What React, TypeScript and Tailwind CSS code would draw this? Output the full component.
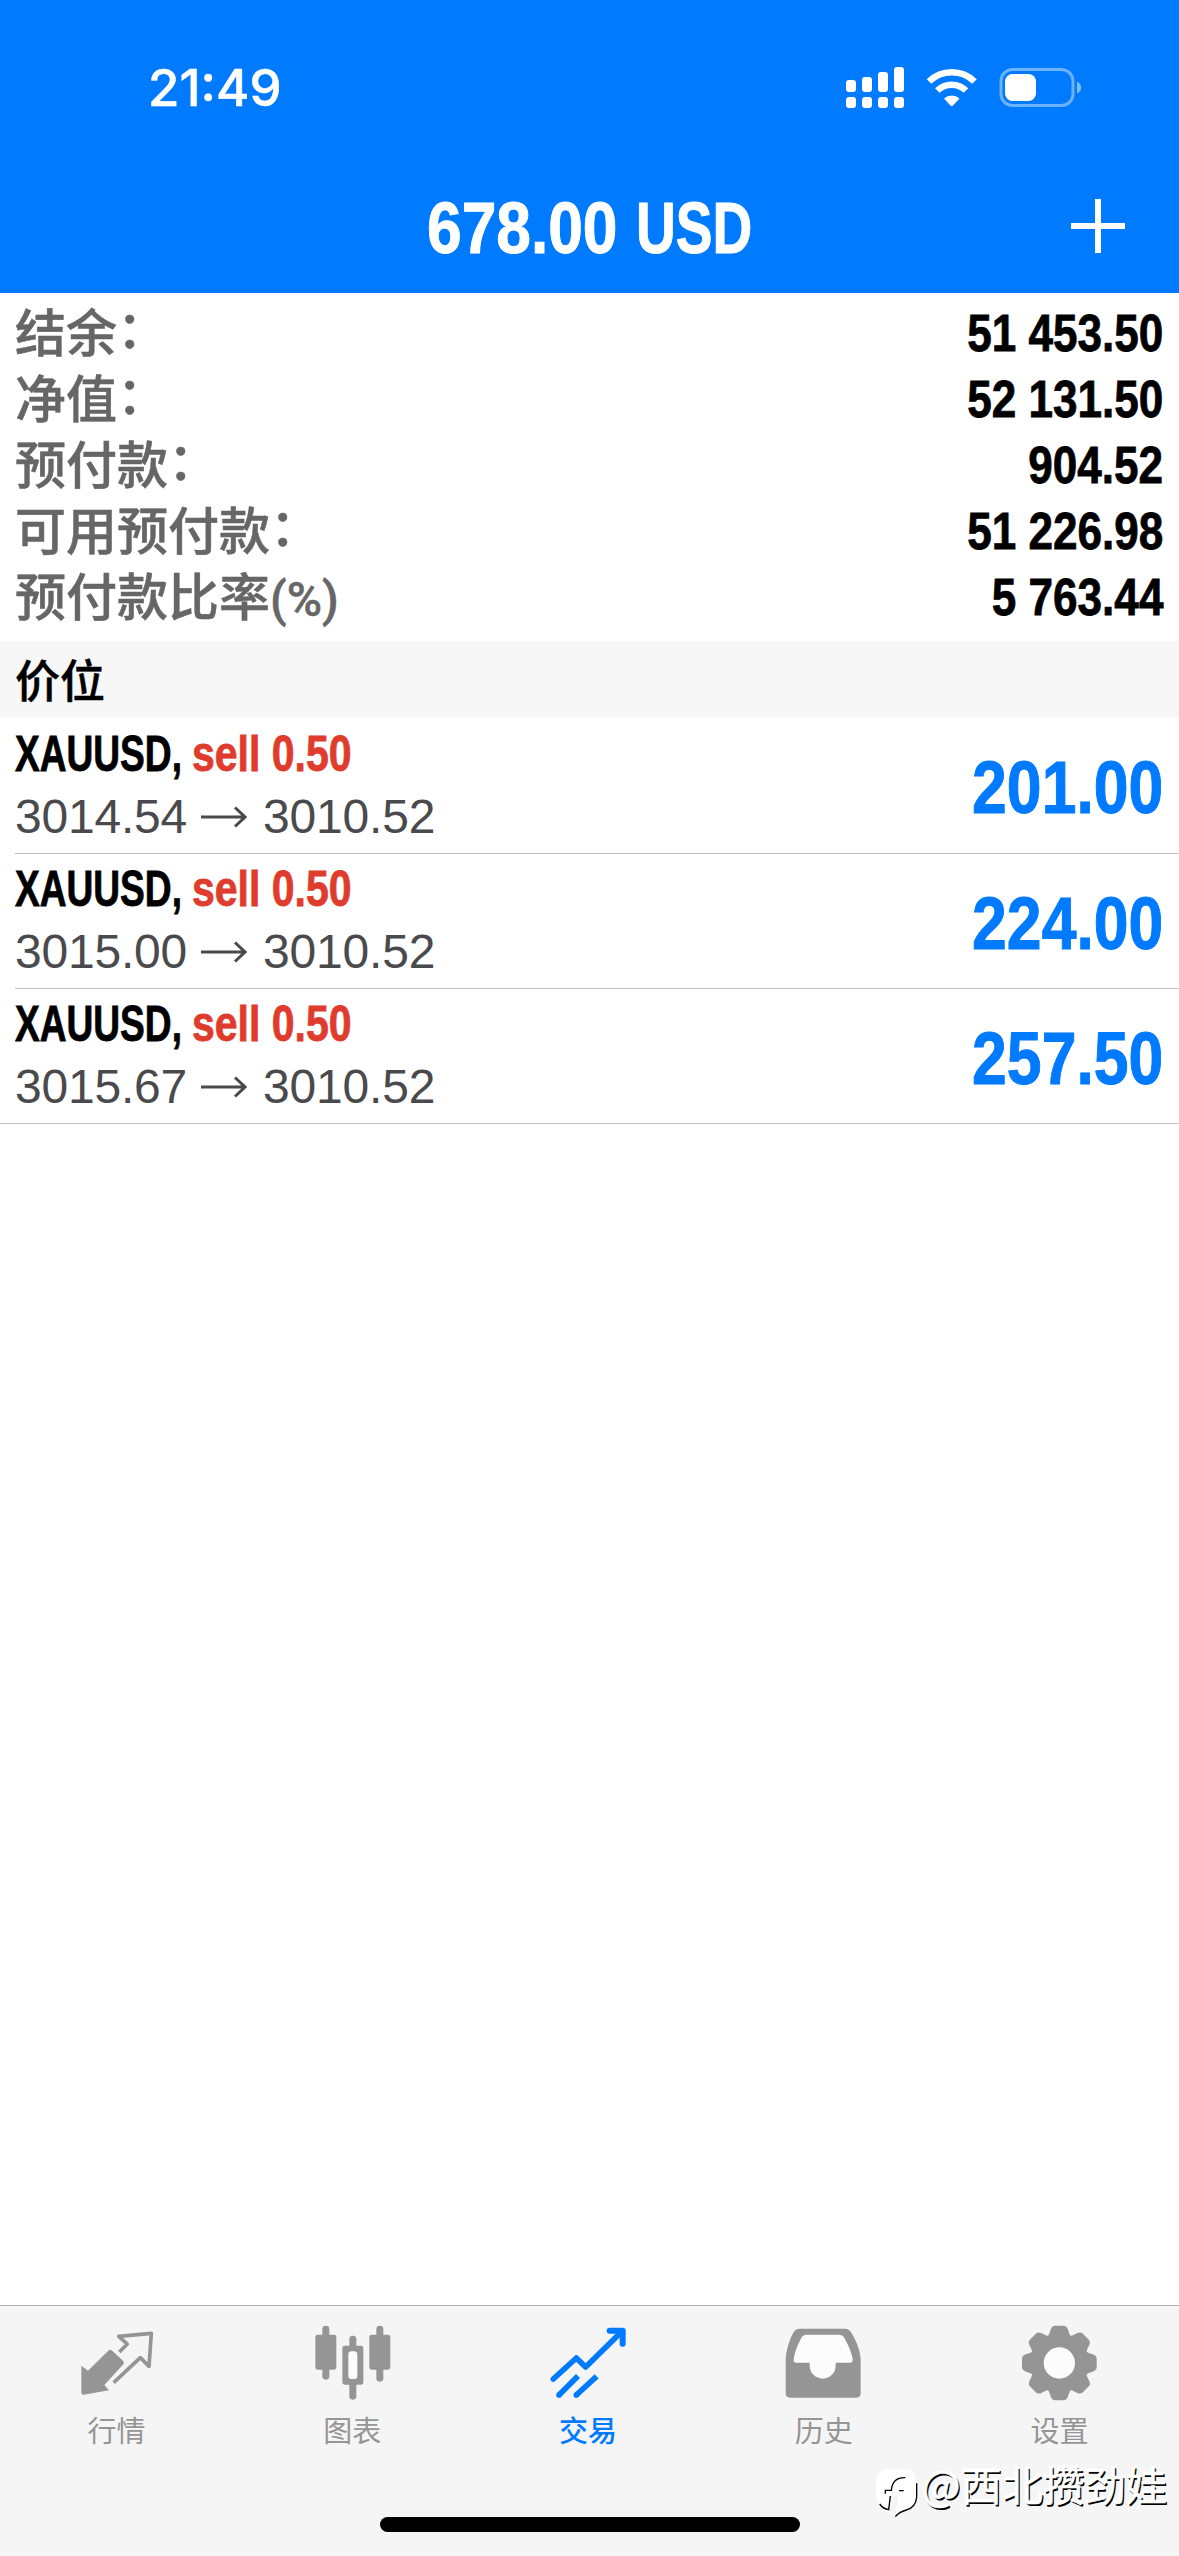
import type { ReactNode } from 'react';

type Position = {
  symbol: string;
  side: string;
  open: string;
  current: string;
  profit: string;
};

const summary = [
  { label: '结余', suffix: '：', value: '51 453.50' },
  { label: '净值', suffix: '：', value: '52 131.50' },
  { label: '预付款', suffix: '：', value: '904.52' },
  { label: '可用预付款', suffix: '：', value: '51 226.98' },
  { label: '预付款比率', suffix: '(%)', value: '5 763.44' },
];

const positions: Position[] = [
  { symbol: 'XAUUSD,', side: 'sell 0.50', open: '3014.54', current: '3010.52', profit: '201.00' },
  { symbol: 'XAUUSD,', side: 'sell 0.50', open: '3015.00', current: '3010.52', profit: '224.00' },
  { symbol: 'XAUUSD,', side: 'sell 0.50', open: '3015.67', current: '3010.52', profit: '257.50' },
];

const teeth = [0, 45, 90, 135, 180, 225, 270, 315];

function QuotesIcon() {
  return (
    <svg viewBox="0 0 240 240" className="size-20" fill="currentColor">
      <path d="M10 128 L30 143 L91 83 Q96 78 101 82 L135 113 Q140 118 136 124 L79 186 L93 202 L17 215 Q10 215 10 209Z" />
      <path
        d="M124 87 L148 63 L122 40 L220 31 L213 130 L187 104 L107 179"
        fill="none"
        stroke="currentColor"
        strokeWidth="11"
        strokeLinejoin="round"
      />
    </svg>
  );
}

function ChartIcon() {
  return (
    <svg viewBox="0 0 240 240" className="size-20" fill="currentColor">
      <rect x="25" y="8" width="21" height="162" rx="10" />
      <rect x="4" y="35" width="63" height="105" rx="7" />
      <rect x="106" y="38" width="21" height="192" rx="10" />
      <rect x="85" y="68" width="63" height="117" rx="7" />
      <rect x="103" y="85" width="27" height="83" rx="10" fill="#fcfcfc" />
      <rect x="187" y="8" width="21" height="168" rx="10" />
      <rect x="166" y="35" width="63" height="105" rx="7" />
    </svg>
  );
}

function TradeIcon() {
  return (
    <svg viewBox="0 0 240 240" className="size-20" fill="none" stroke="currentColor" strokeWidth="17">
      <path d="M13 168 L82 105 L110 132 L220 24" strokeLinecap="round" strokeLinejoin="round" />
      <path d="M182 23 H221 V62" strokeWidth="18" strokeLinecap="round" strokeLinejoin="round" />
      <path d="M30 216 L87 159 M82 216 L143 160" />
      <circle cx="30" cy="216" r="8.5" fill="currentColor" stroke="none" />
      <circle cx="82" cy="216" r="8.5" fill="currentColor" stroke="none" />
    </svg>
  );
}

function HistoryIcon() {
  return (
    <svg viewBox="0 0 240 240" className="size-20" fill="currentColor">
      <path d="M2 110 C4 75 16 45 25 29 Q31 17 44 17 H180 Q192 17 199 29 C212 50 226 80 227 110 V211 Q227 224 214 224 H15 Q2 224 2 211Z" />
      <path
        d="M62 35 H164 Q173 35 177 43 C187 62 199 85 203 108 Q204 119 196 119 H152 V128 A39 39 0 0 1 74 128 V119 H34 Q25 119 26 110 C29 85 40 62 50 43 Q54 35 62 35Z"
        fill="#fcfcfc"
      />
    </svg>
  );
}

function SettingsIcon() {
  return (
    <svg viewBox="-115 -120 240 240" className="size-20" fill="currentColor">
      <circle r="88" />
      {teeth.map((angle) => (
        <path
          key={angle}
          transform={`rotate(${angle})`}
          d="M-36 -78 Q-29 -87 -26 -100 Q-22 -112 -13 -112 H13 Q22 -112 26 -100 Q29 -87 36 -78Z"
        />
      ))}
      <circle r="47" fill="#fcfcfc" />
    </svg>
  );
}

const tabs: { label: string; icon: ReactNode; active?: boolean }[] = [
  { label: '行情', icon: <QuotesIcon /> },
  { label: '图表', icon: <ChartIcon /> },
  { label: '交易', icon: <TradeIcon />, active: true },
  { label: '历史', icon: <HistoryIcon /> },
  { label: '设置', icon: <SettingsIcon /> },
];

function StatusIcons() {
  return (
    <svg viewBox="0 0 240 46" className="h-[46px] w-[240px]" fill="white">
      {/* dual sim signal */}
      <rect x="0" y="15" width="10" height="12" rx="3" />
      <rect x="16" y="12" width="10" height="15" rx="3" />
      <rect x="32" y="7" width="10" height="20" rx="3" />
      <rect x="48" y="2" width="10" height="25" rx="3" />
      <rect x="0" y="32" width="10" height="11" rx="3" />
      <rect x="16" y="32" width="10" height="11" rx="3" />
      <rect x="32" y="32" width="10" height="11" rx="3" />
      <rect x="48" y="32" width="10" height="11" rx="3" />
      {/* wifi */}
      <path d="M83 16.5 A32.5 32.5 0 0 1 128.5 16.5" fill="none" stroke="white" strokeWidth="6.5" />
      <path d="M91.3 25.5 A20.5 20.5 0 0 1 120 25.5" fill="none" stroke="white" strokeWidth="6.5" />
      <path d="M98 33.5 A11.5 11.5 0 0 1 113.5 33.5 L107 40.4 Q105.7 41.7 104.4 40.4Z" />
      {/* battery */}
      <rect x="155" y="4.5" width="72" height="36" rx="11.5" fill="none" stroke="white" strokeOpacity="0.42" strokeWidth="3" />
      <rect x="159" y="9" width="31" height="27" rx="7.5" />
      <path d="M231 16.5 Q235 18 235 22.5 Q235 27 231 28.5Z" fillOpacity="0.5" />
    </svg>
  );
}

function Watermark() {
  return (
    <div className="absolute right-[12px] bottom-[38px] flex items-start text-white">
      <svg viewBox="12 24 132 150" className="mt-[5px] h-[50px] w-[44px]" fill="none" stroke="black" strokeWidth="4">
        <path
          d="M50 28 H102 Q136 28 136 66 V112 Q136 146 104 152 Q86 156 72 170 L50 150 Q16 140 16 108 V66 Q16 28 50 28Z"
          fill="white"
          stroke="none"
        />
        <path d="M60 106 H82 L74 168 L54 152Z" fill="#f5f5f5" stroke="none" />
        <path d="M43 101 V91 H61 Q64 52 103 53 M84 92 H98 M58 108 L53 149 Q36 146 26 132 M137 70 V112 Q134 142 106 150 Q84 156 73 170" />
      </svg>
      <span className="ml-[2px] font-['Noto_Sans_CJK_SC',sans-serif] text-[41.3px] leading-none [-webkit-text-stroke:0.5px_white] [text-shadow:1.5px_1.5px_0_#000]">
        @西北攒劲娃
      </span>
    </div>
  );
}

function App() {
  return (
    <div className="relative flex h-[2556px] w-[1179px] flex-col overflow-hidden bg-white font-['Liberation_Sans','Noto_Sans_CJK_SC',sans-serif]">
      <header className="flex h-[293px] flex-col bg-[#007aff] text-white">
        <div className="flex h-[176px] items-center justify-between pr-[93px] pl-[148px]">
          <span className="pb-[2px] font-['Inter',sans-serif] text-[51px] leading-none font-medium [-webkit-text-stroke:0.5px]">21:49</span>
          <StatusIcons />
        </div>
        <div className="grid h-[104px] grid-cols-[1fr_auto_1fr] items-center">
          <span />
          <h1 className="flex w-[325px] text-[72px] leading-none font-bold whitespace-nowrap [-webkit-text-stroke:1px]">
            <span className="w-[209px] origin-left scale-x-[0.865]">678.00</span>
            <span className="w-[116px] origin-left scale-x-[0.765]">USD</span>
          </h1>
          <svg viewBox="0 0 54 54" className="mr-[54px] mb-1 size-[54px] justify-self-end">
            <path d="M27 0 V54 M0 27 H54" stroke="white" strokeWidth="6" />
          </svg>
        </div>
      </header>

      <section className="h-[348px] pt-[7px] pr-4 pl-[15px]">
        {summary.map((row) => (
          <div key={row.label} className="flex h-[66px] items-center justify-between">
            <span className="pb-[6px] font-['Noto_Sans_CJK_SC',sans-serif] text-[51px] leading-none font-medium whitespace-nowrap text-[#666] [-webkit-text-stroke:0.5px]">
              {row.label}
              <span className={row.suffix === '：' ? 'align-[4px] leading-[0]' : "font-['Roboto',sans-serif] text-[48px] leading-[0]"}>
                {row.suffix}
              </span>
            </span>
            <span className="origin-right scale-x-[0.848] text-[52px] leading-none font-bold text-black [-webkit-text-stroke:0.8px]">
              {row.value}
            </span>
          </div>
        ))}
      </section>

      <div className="flex h-[77px] items-center bg-[#f7f7f7] pb-[3px] pl-[15px]">
        <h2 className="font-['Noto_Sans_CJK_SC',sans-serif] text-[45px] leading-none font-medium text-black [-webkit-text-stroke:0.5px]">
          价位
        </h2>
      </div>

      <ul className="border-b border-[#c0c0c0]">
        {positions.map((p, i) => (
          <li key={p.open} className="pl-[15px]">
            <div className={`flex h-[135px] items-center justify-between pr-4 ${i > 0 ? 'border-t border-[#c0c0c0]' : ''}`}>
              <div className="flex flex-col gap-[14px] pb-[2px]">
                <p className="flex text-[50px] leading-[50px] font-bold whitespace-nowrap text-black [-webkit-text-stroke:0.8px]">
                  <span className="w-[177px] origin-left scale-x-[0.742]">{p.symbol}</span>
                  <span className="w-[170px] origin-left scale-x-[0.82] text-[#e03c2d]">{p.side}</span>
                </p>
                <p className="flex items-center text-[48px] leading-[48px] tracking-[-0.2px] text-[#4a4a4c]">
                  {p.open}
                  <svg viewBox="0 0 46 22" className="mr-4 ml-[14px] h-[22px] w-[46px]" fill="none" stroke="currentColor" strokeWidth="3">
                    <path d="M0 11 H44 M34 1.5 L44 11 L34 20.5" />
                  </svg>
                  {p.current}
                </p>
              </div>
              <span className="origin-right scale-x-[0.845] pt-[5px] text-[74px] leading-none font-bold text-[#007aff] [-webkit-text-stroke:1px]">
                {p.profit}
              </span>
            </div>
          </li>
        ))}
      </ul>

      <nav className="mt-auto flex h-[251px] flex-col justify-between border-t border-[#b2b2b2] bg-[#f5f5f5] pb-6">
        <div className="grid grid-cols-5 pt-[17px]">
          {tabs.map((tab) => (
            <div
              key={tab.label}
              className={`flex flex-col items-center gap-3 ${tab.active ? 'font-medium text-[#007aff]' : 'text-[#959595]'}`}
            >
              {tab.icon}
              <span className="pr-[3px] font-['Noto_Sans_CJK_SC',sans-serif] text-[29px] leading-none">{tab.label}</span>
            </div>
          ))}
        </div>
        <div className="h-[15px] w-[420px] self-center rounded-full bg-black" />
      </nav>

      <Watermark />
    </div>
  );
}

export default App;
